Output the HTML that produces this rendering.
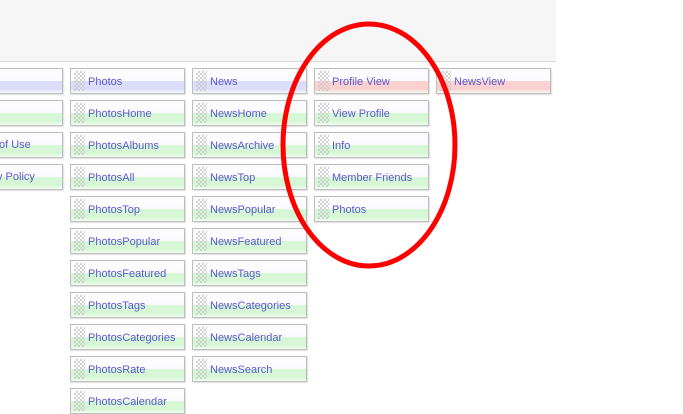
<!DOCTYPE html>
<html><head><style>
body{margin:0;width:683px;height:413px;background:#fff;position:relative;overflow:hidden;font-family:"Liberation Sans",sans-serif}
.top{position:absolute;left:0;top:0;width:556px;height:61px;background:#f6f6f6;border-bottom:1px solid #d8d8d8}
.b{position:absolute;width:113px;height:24px;border:1px solid #bdbdbd;box-shadow:1px 1px 1px #ddd;background:linear-gradient(#fcfcfe 0,#fbfbfe 50%,var(--c) 50%,var(--c) 85%,#f6fcf6 100%);font-size:11px;color:#5a5ad0;line-height:26px;box-sizing:content-box;overflow:hidden;white-space:nowrap}
.b i{position:absolute;left:3px;top:2px;width:11px;height:20px;background-image:linear-gradient(45deg,#c8c8c8 25%,transparent 25%,transparent 75%,#c8c8c8 75%),linear-gradient(45deg,#c8c8c8 25%,transparent 25%,transparent 75%,#c8c8c8 75%);background-size:4px 4px;background-position:0 0,2px 2px;opacity:.8}
.b span{position:absolute;left:17px;top:0}
.g{--c:#d5f7d5}.p{--c:#dcdcfb}.r{--c:#fbd0d0}
.t{position:absolute;font-size:11px;color:#5a5ad0;line-height:26px;white-space:nowrap}
</style></head><body>
<div class="top"></div>
<div class="b p" style="left:-52px;top:68px"></div>
<div class="b g" style="left:-52px;top:100px"></div>
<div class="b g" style="left:-52px;top:132px"></div>
<div class="b g" style="left:-52px;top:164px"></div>
<div class="t" style="left:-1px;top:132px">of Use</div>
<div class="t" style="left:-3px;top:164px">y Policy</div>

<div class="b p" style="left:70px;top:68px"><i></i><span>Photos</span></div>
<div class="b g" style="left:70px;top:100px"><i></i><span>PhotosHome</span></div>
<div class="b g" style="left:70px;top:132px"><i></i><span>PhotosAlbums</span></div>
<div class="b g" style="left:70px;top:164px"><i></i><span>PhotosAll</span></div>
<div class="b g" style="left:70px;top:196px"><i></i><span>PhotosTop</span></div>
<div class="b g" style="left:70px;top:228px"><i></i><span>PhotosPopular</span></div>
<div class="b g" style="left:70px;top:260px"><i></i><span>PhotosFeatured</span></div>
<div class="b g" style="left:70px;top:292px"><i></i><span>PhotosTags</span></div>
<div class="b g" style="left:70px;top:324px"><i></i><span>PhotosCategories</span></div>
<div class="b g" style="left:70px;top:356px"><i></i><span>PhotosRate</span></div>
<div class="b g" style="left:70px;top:388px"><i></i><span>PhotosCalendar</span></div>

<div class="b p" style="left:192px;top:68px"><i></i><span>News</span></div>
<div class="b g" style="left:192px;top:100px"><i></i><span>NewsHome</span></div>
<div class="b g" style="left:192px;top:132px"><i></i><span>NewsArchive</span></div>
<div class="b g" style="left:192px;top:164px"><i></i><span>NewsTop</span></div>
<div class="b g" style="left:192px;top:196px"><i></i><span>NewsPopular</span></div>
<div class="b g" style="left:192px;top:228px"><i></i><span>NewsFeatured</span></div>
<div class="b g" style="left:192px;top:260px"><i></i><span>NewsTags</span></div>
<div class="b g" style="left:192px;top:292px"><i></i><span>NewsCategories</span></div>
<div class="b g" style="left:192px;top:324px"><i></i><span>NewsCalendar</span></div>
<div class="b g" style="left:192px;top:356px"><i></i><span>NewsSearch</span></div>

<div class="b r" style="left:314px;top:68px"><i></i><span>Profile View</span></div>
<div class="b g" style="left:314px;top:100px"><i></i><span>View Profile</span></div>
<div class="b g" style="left:314px;top:132px"><i></i><span>Info</span></div>
<div class="b g" style="left:314px;top:164px"><i></i><span>Member Friends</span></div>
<div class="b g" style="left:314px;top:196px"><i></i><span>Photos</span></div>

<div class="b r" style="left:436px;top:68px"><i></i><span>NewsView</span></div>

<svg style="position:absolute;left:0;top:0" width="683" height="413"><ellipse cx="369" cy="145" rx="86" ry="121" fill="none" stroke="#f00" stroke-width="5"/></svg>
</body></html>
